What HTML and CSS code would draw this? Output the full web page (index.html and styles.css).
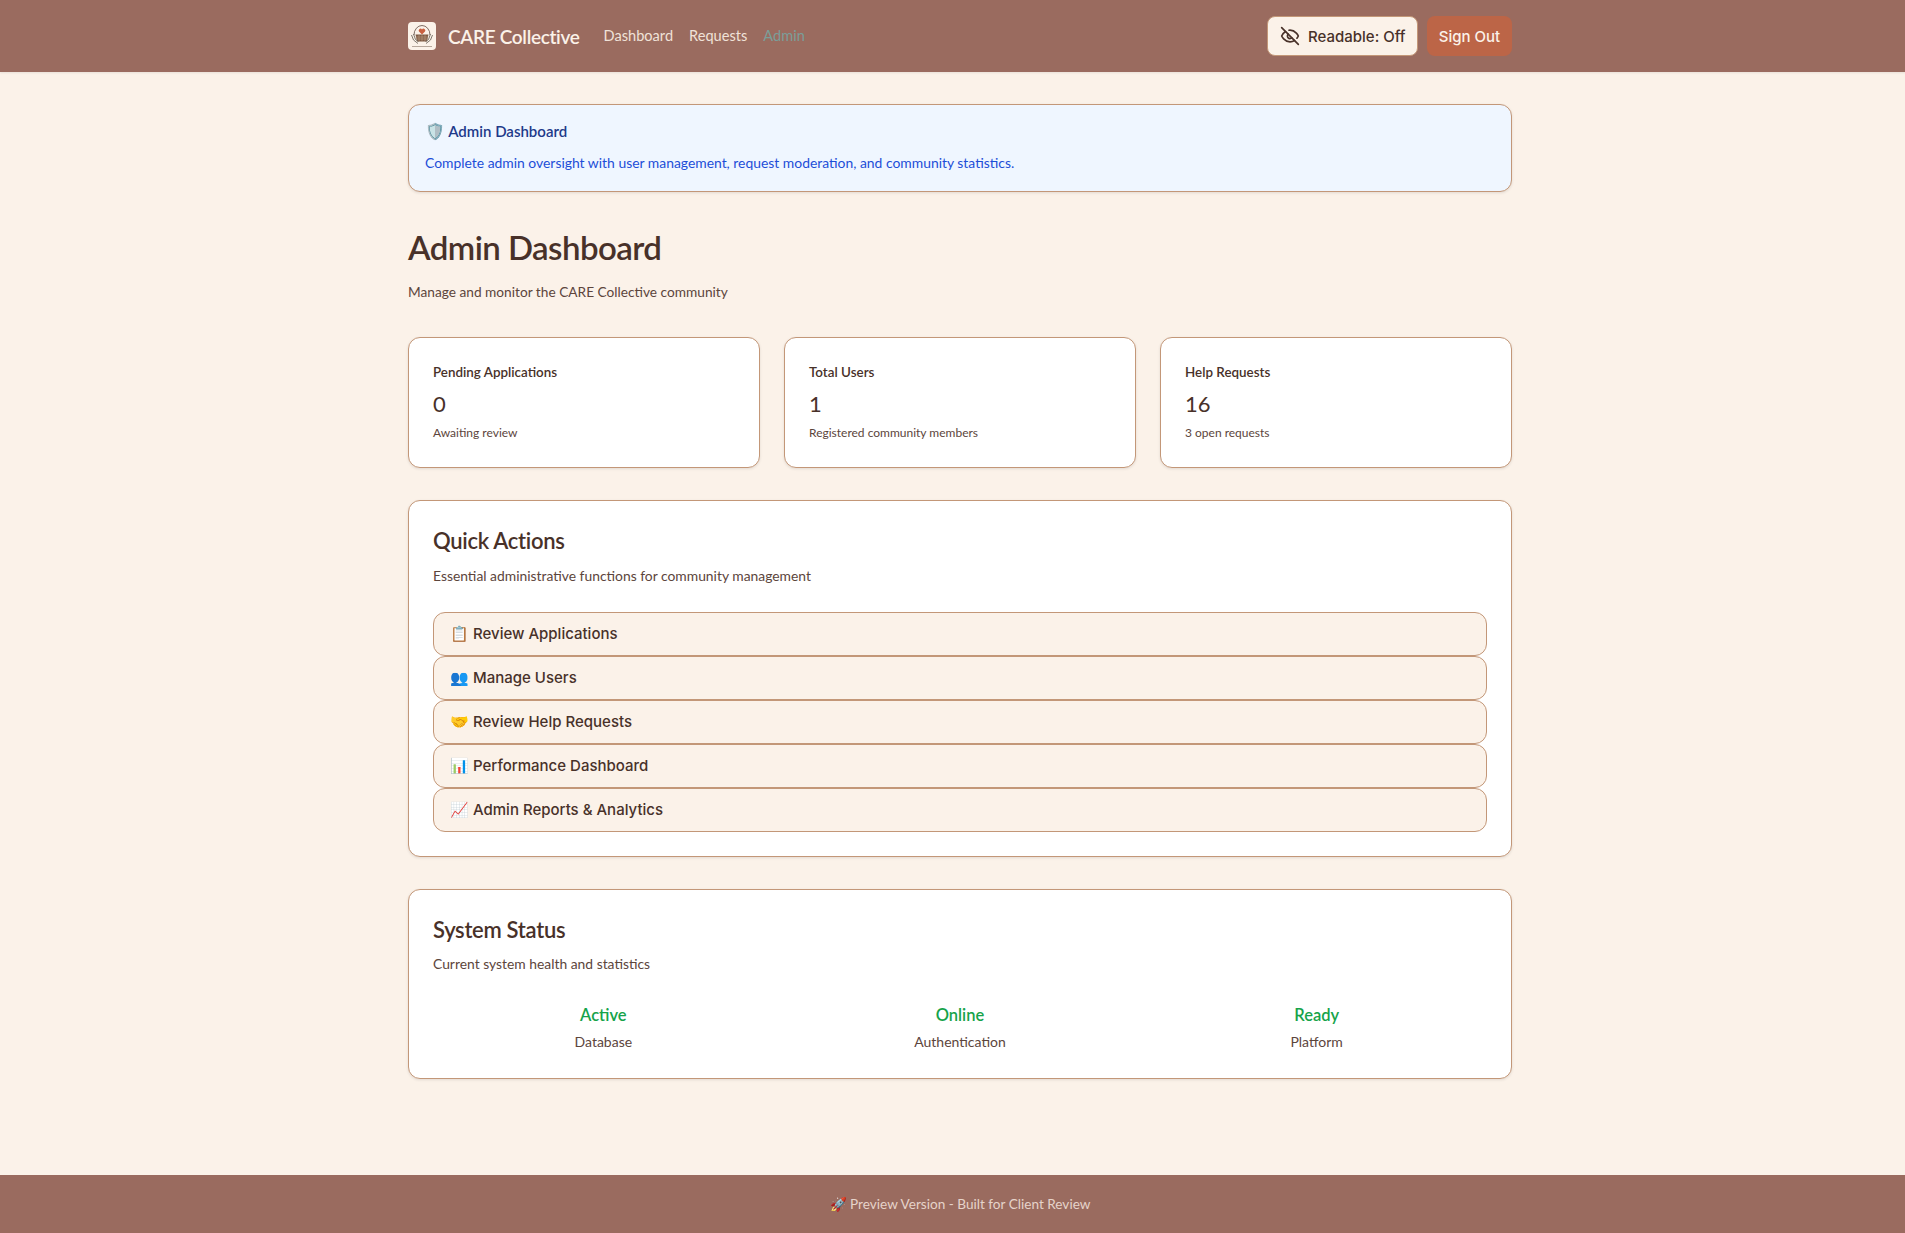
FILE: index.html
```html
<!DOCTYPE html>
<html lang="en">
<head>
  <meta charset="UTF-8">
  <meta name="viewport" content="width=device-width, initial-scale=1.0">
  <title>Admin Dashboard - CARE Collective</title>
  <link rel="stylesheet" href="styles.css">
</head>
<body>
<header class="site-header">
  <div class="header-inner">
    <div class="header-left">
      <a class="brand">
        <svg class="brand-logo" viewBox="0 0 28 28">
          <rect width="28" height="28" rx="4" fill="#fbf2e9"/>
          <path d="M6 13a8 9.500 0 0 1 16 0" fill="none" stroke="#5f4a40" stroke-width="0.8"/>
          <path d="M14 12.500l-3-3a1.800 1.800 0 0 1 3-2a1.800 1.800 0 0 1 3 2z" fill="#c9603f"/>
          <path d="M7.500 12.500h13l-1.500 7h-10z" fill="#7d5a44"/>
          <path d="M8 15h12M8.500 17h11M11 12.500v7M14 12.500v7M17 12.500v7" stroke="#c9a98c" stroke-width="0.5"/>
          <path d="M3.500 13l2 5 4.500 3.500M24.500 13l-2 5-4.500 3.500M5.500 12l2 5.500 3 2M22.500 12l-2 5.500-3 2" fill="none" stroke="#6f6a60" stroke-width="0.9"/>
          <path d="M4 24.500h20" stroke="#a59386" stroke-width="0.8"/>
        </svg>
        <span class="brand-name">CARE Collective</span>
      </a>
      <nav class="main-nav">
        <a>Dashboard</a>
        <a>Requests</a>
        <a class="nav-active">Admin</a>
      </nav>
    </div>
    <div class="header-right">
      <button class="btn-readable">
        <svg class="eye-icon" viewBox="0 0 24 24">
          <path d="M9.880 9.880a3 3 0 1 0 4.240 4.240"/>
          <path d="M10.730 5.080A10.430 10.430 0 0 1 12 5c7 0 10 7 10 7a13.160 13.160 0 0 1-1.670 2.680"/>
          <path d="M6.610 6.610A13.526 13.526 0 0 0 2 12s3 7 10 7a9.740 9.740 0 0 0 5.390-1.610"/>
          <path d="M2 2l20 20"/>
        </svg>
        Readable: Off
      </button>
      <button class="btn-signout">Sign Out</button>
    </div>
  </div>
</header>

<main class="content">
  <section class="banner">
    <h3><span class="emoji">🛡️</span> Admin Dashboard</h3>
    <p>Complete admin oversight with user management, request moderation, and community statistics.</p>
  </section>

  <div class="page-title">
    <h1>Admin Dashboard</h1>
    <p>Manage and monitor the CARE Collective community</p>
  </div>

  <div class="stats">
    <div class="card stat-card">
      <h4>Pending Applications</h4>
      <div class="stat-value">0</div>
      <p>Awaiting review</p>
    </div>
    <div class="card stat-card">
      <h4>Total Users</h4>
      <div class="stat-value">1</div>
      <p>Registered community members</p>
    </div>
    <div class="card stat-card">
      <h4>Help Requests</h4>
      <div class="stat-value">16</div>
      <p>3 open requests</p>
    </div>
  </div>

  <section class="card panel">
    <h2>Quick Actions</h2>
    <p class="panel-sub">Essential administrative functions for community management</p>
    <div class="actions">
      <a class="action"><span class="emoji">📋</span> Review Applications</a>
      <a class="action"><span class="emoji">👥</span> Manage Users</a>
      <a class="action"><span class="emoji">🤝</span> Review Help Requests</a>
      <a class="action"><span class="emoji">📊</span> Performance Dashboard</a>
      <a class="action"><span class="emoji">📈</span> Admin Reports &amp; Analytics</a>
    </div>
  </section>

  <section class="card panel status-panel">
    <h2>System Status</h2>
    <p class="panel-sub">Current system health and statistics</p>
    <div class="status-grid">
      <div class="status-item">
        <strong>Active</strong>
        <span>Database</span>
      </div>
      <div class="status-item">
        <strong>Online</strong>
        <span>Authentication</span>
      </div>
      <div class="status-item">
        <strong>Ready</strong>
        <span>Platform</span>
      </div>
    </div>
  </section>
</main>

<footer class="site-footer">🚀 Preview Version - Built for Client Review</footer>
</body>
</html>
```

FILE: styles.css
```css
html {
  overflow-x: hidden;
}
body {
  width: 1920px;
  min-height: 1233px;
  margin: 0;
  display: flex;
  flex-direction: column;
  background-color: #fbf2e9;
  color: #483129;
  font-family: Lato, "Noto Sans", sans-serif;
  font-size: 14px;
}
h1, h2, h3, h4, p {
  margin: 0;
}
.site-header {
  height: 72px;
  background-color: #9a6b5f;
  box-shadow: 0 1px 2px rgba(0, 0, 0, 0.08);
}
.header-inner {
  width: 1104px;
  height: 100%;
  margin: 0 auto;
  display: flex;
  align-items: center;
  justify-content: space-between;
}
.header-left {
  display: flex;
  align-items: center;
  gap: 24px;
}
.brand {
  display: flex;
  align-items: center;
  gap: 12px;
}
.brand-logo {
  width: 28px;
  height: 28px;
}
.brand-name {
  color: #fbf2e9;
  font-size: 19px;
  font-weight: 600;
  letter-spacing: -0.33px;
}
.main-nav {
  display: flex;
  gap: 16px;
  font-size: 14.6px;
  line-height: 20px;
  padding-bottom: 1px;
  color: #f0e2d8;
}
.nav-active {
  color: #7a9e99;
}
.header-right {
  display: flex;
  align-items: center;
  gap: 9px;
}
.header-right button {
  height: 40px;
  border-radius: 8px;
  font-family: Inter, sans-serif;
  font-size: 15px;
  font-weight: 500;
  white-space: nowrap;
}
.btn-readable {
  display: flex;
  align-items: center;
  gap: 8px;
  width: 151px;
  padding: 0 12px;
  background-color: #fbf2e9;
  border: 1px solid #c39778;
  color: #483129;
}
.eye-icon {
  flex: none;
  width: 20px;
  height: 20px;
  fill: none;
  stroke: #483129;
  stroke-width: 2;
  stroke-linecap: round;
  stroke-linejoin: round;
}
.btn-signout {
  width: 85px;
  background-color: #bc6547;
  border: none;
  color: #fbf2e9;
}
.content {
  width: 1104px;
  margin: 0 auto;
  padding-top: 32px;
  flex: 1;
}
.card {
  background: white;
  border: 1px solid #c39778;
  border-radius: 12px;
  box-shadow: 0 1px 3px rgba(0, 0, 0, 0.1);
}
.banner {
  height: 88px;
  box-sizing: border-box;
  padding: 16px;
  background-color: #eff6ff;
  border: 1px solid #c39778;
  border-radius: 12px;
  box-shadow: 0 1px 3px rgba(0, 0, 0, 0.1);
}
.banner h3 {
  color: #1e3a8a;
  font-size: 15px;
  font-weight: 600;
  line-height: 20px;
}
.banner .emoji {
  font-size: 16px;
}
.banner p {
  margin-top: 12px;
  color: #1d4ed8;
  font-size: 13.9px;
  line-height: 20px;
}
.page-title {
  margin-top: 31px;
}
.page-title h1 {
  font-size: 33px;
  font-weight: 600;
  letter-spacing: -0.55px;
  line-height: 48px;
}
.page-title p {
  margin-top: 9px;
  font-size: 13.7px;
  line-height: 24px;
  color: #5c453c;
}
.stats {
  display: grid;
  grid-template-columns: repeat(3, 352px);
  gap: 24px;
  margin-top: 33px;
}
.stat-card {
  height: 131px;
  box-sizing: border-box;
  padding: 24px;
}
.stat-card h4 {
  font-size: 13.4px;
  font-weight: 600;
  line-height: 20px;
}
.stat-value {
  margin-top: 6px;
  font-size: 22px;
  line-height: 32px;
}
.stat-card p {
  margin-top: 5px;
  font-size: 12px;
  line-height: 16px;
  color: #5c453c;
}
.panel {
  margin-top: 32px;
  padding: 24px;
}
.panel h2 {
  font-size: 22px;
  font-weight: 600;
  letter-spacing: -0.3px;
  line-height: 32px;
}
.panel-sub {
  margin-top: 9px;
  font-size: 13.86px;
  line-height: 20px;
  color: #5c453c;
}
.actions {
  display: flex;
  flex-direction: column;
  margin-top: 26px;
}
.action {
  height: 44px;
  box-sizing: border-box;
  display: flex;
  align-items: center;
  gap: 4px;
  padding: 0 16px 1px;
  background-color: #fbf2e9;
  border: 1px solid #c39778;
  border-radius: 12px;
  font-family: Inter, sans-serif;
  font-size: 15px;
  font-weight: 500;
}
.status-panel {
  height: 190px;
  box-sizing: border-box;
}
.status-panel .panel-sub {
  margin-top: 8px;
}
.status-grid {
  display: grid;
  grid-template-columns: repeat(3, 1fr);
  gap: 16px;
  margin-top: 29px;
  text-align: center;
}
.status-item strong {
  display: block;
  color: #16a34a;
  font-size: 16.5px;
  font-weight: 600;
  line-height: 24px;
}
.status-item span {
  display: block;
  margin-top: 5px;
  line-height: 20px;
  color: #5c453c;
}
.site-footer {
  height: 58px;
  box-sizing: border-box;
  padding-bottom: 1px;
  display: flex;
  align-items: center;
  justify-content: center;
  background-color: #9a6b5f;
  color: #e6d3ca;
  font-size: 13.6px;
}
```
